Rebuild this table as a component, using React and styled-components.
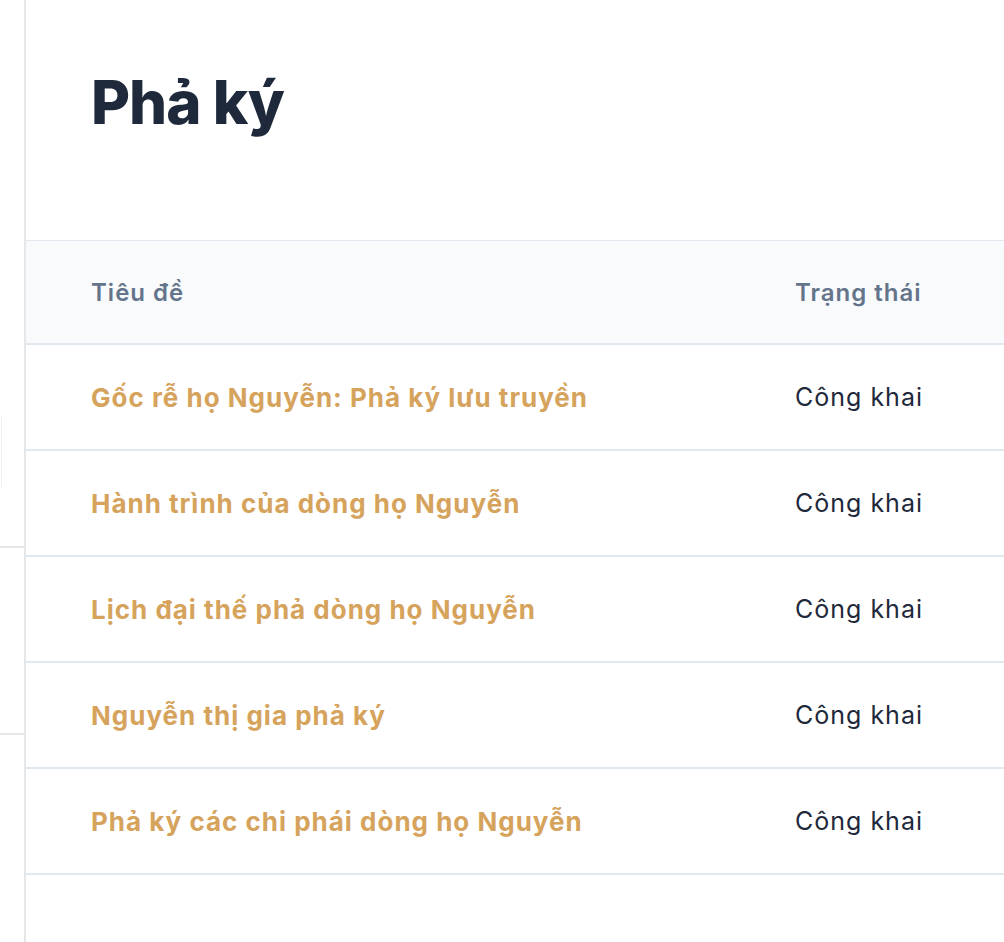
import React from "react";
import styled, { createGlobalStyle } from "styled-components";

const Global = createGlobalStyle`
  html, body { margin: 0; padding: 0; background: #ffffff; }
  body { font-family: Inter, "Noto Sans", "Liberation Sans", sans-serif; -webkit-font-smoothing: antialiased; }
  * { box-sizing: border-box; }
`;

const Layout = styled.div`
  display: flex;
  width: 100%;
  min-height: 942px;
  overflow: hidden;
`;

const Sidebar = styled.aside`
  flex: 0 0 26px;
  border-right: 2px solid #e5e7eb;
  display: flex;
  flex-direction: column;
`;

const SideBox = styled.div`
  margin-top: 417px;
  height: 70px;
  width: 2px;
  border-right: 1px solid #eef0f3;
`;

const SideDivider = styled.div`
  height: 2px;
  background: #e5e7eb;
  margin-top: ${(p) => p.$gap}px;
`;

const Main = styled.main`
  flex: 1;
  min-width: 0;
  overflow: hidden;
`;

const PageHeader = styled.header`
  height: 240px;
  padding: 66px 0 0 65px;
`;

const Title = styled.h1`
  margin: 0;
  font-size: 60px;
  line-height: 72px;
  font-weight: 800;
  letter-spacing: -1px;
  color: #1e293b;
`;

const Table = styled.div`
  width: 1300px;
  border-top: 1px solid #e2e8f0;
`;

const Row = styled.div`
  display: grid;
  grid-template-columns: 769px 1fr;
  align-items: center;
  height: ${(p) => (p.$head ? 104 : 106)}px;
  background: ${(p) => (p.$head ? "#f8fafc" : "#ffffff")};
  border-bottom: 2px solid #e2e8f0;
`;

const Cell = styled.div`
  padding-left: ${(p) => (p.$first ? 65 : 0)}px;
  white-space: nowrap;
`;

const HeadText = styled.span`
  font-size: 24px;
  font-weight: 600;
  letter-spacing: 1px;
  color: #64748b;
`;

const LinkText = styled.a`
  font-size: 26px;
  font-weight: 700;
  letter-spacing: 1px;
  color: #d6a35d;
  text-decoration: none;
`;

const StatusText = styled.span`
  font-size: 25px;
  font-weight: 400;
  letter-spacing: 1px;
  color: #1e293b;
`;

const rows = [
  "Gốc rễ họ Nguyễn: Phả ký lưu truyền",
  "Hành trình của dòng họ Nguyễn",
  "Lịch đại thế phả dòng họ Nguyễn",
  "Nguyễn thị gia phả ký",
  "Phả ký các chi phái dòng họ Nguyễn",
];

export default function App() {
  return (
    <>
      <Global />
      <Layout>
        <Sidebar>
          <SideBox />
          <SideDivider $gap={59} />
          <SideDivider $gap={185} />
        </Sidebar>
        <Main>
          <PageHeader>
            <Title>Phả ký</Title>
          </PageHeader>
          <Table>
            <Row $head>
              <Cell $first>
                <HeadText>Tiêu đề</HeadText>
              </Cell>
              <Cell>
                <HeadText>Trạng thái</HeadText>
              </Cell>
            </Row>
            {rows.map((r) => (
              <Row key={r}>
                <Cell $first>
                  <LinkText href="#">{r}</LinkText>
                </Cell>
                <Cell>
                  <StatusText>Công khai</StatusText>
                </Cell>
              </Row>
            ))}
          </Table>
        </Main>
      </Layout>
    </>
  );
}
